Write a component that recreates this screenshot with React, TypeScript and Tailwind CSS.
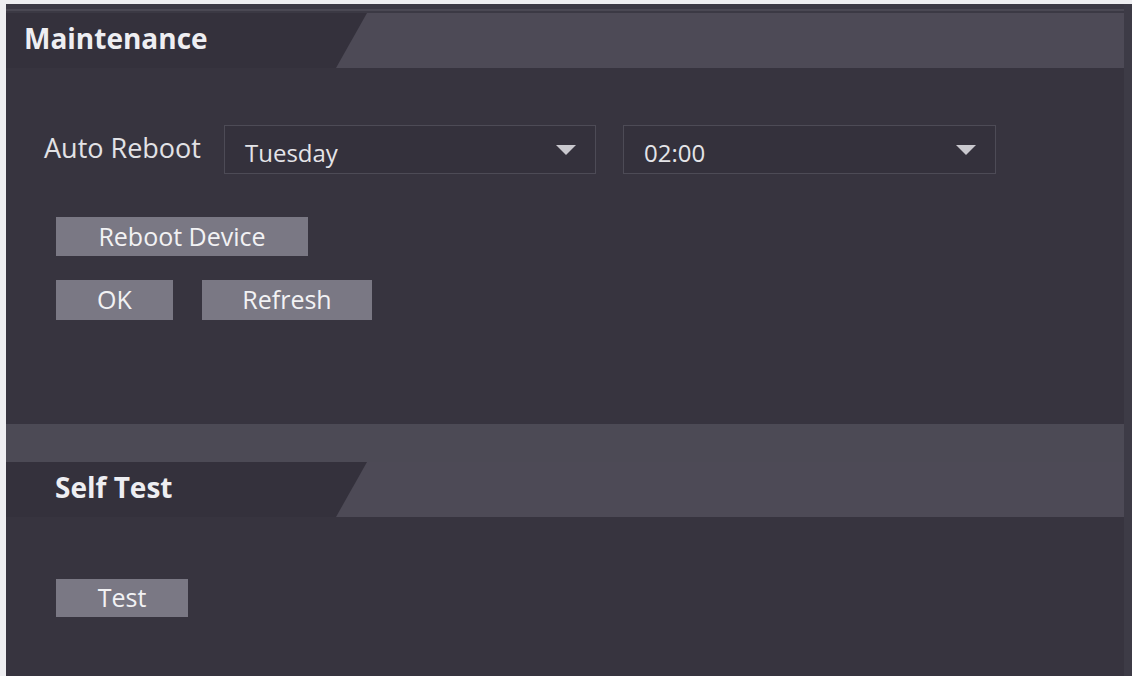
import React, { useState } from "react";

const days = ["Monday", "Tuesday", "Wednesday", "Thursday", "Friday", "Saturday", "Sunday"];

function Arrow() {
  return (
    <svg width="20" height="10" viewBox="0 0 20 10" className="shrink-0">
      <polygon points="0,0 20,0 10,10" fill="#c9c8ce" />
    </svg>
  );
}

function Dropdown({ value, width }: { value: string; width: string }) {
  return (
    <div
      className={`${width} h-[49px] flex items-center justify-between border border-[#4d4b56] bg-[#34313c] pl-[20px] pr-[19px]`}
    >
      <span className="text-[24px] text-[#e4e4e8] pt-[6px]">{value}</span>
      <Arrow />
    </div>
  );
}

function Button({ label, className }: { label: string; className: string }) {
  return (
    <button
      type="button"
      className={`${className} flex items-center justify-center bg-[#7a7884] text-[25px] text-[#f2f2f4]`}
    >
      {label}
    </button>
  );
}

function SectionHeader({ title, pl }: { title: string; pl: string }) {
  return (
    <div className="h-[55px] flex bg-[#4d4a56]">
      <div
        className={`w-[361px] h-full flex items-center ${pl} pb-[5px] bg-[#34313c] [clip-path:polygon(0_0,100%_0,calc(100%-31px)_100%,0_100%)]`}
      >
        <span className="text-[28px] font-bold text-[#eeeef2]">{title}</span>
      </div>
    </div>
  );
}

export default function App() {
  const [day] = useState(days[1]);
  const [time] = useState("02:00");

  return (
    <div
      className="w-[1132px] h-[676px] bg-[#eeeef1] pt-[4px] pl-[6px] overflow-hidden"
      style={{ fontFamily: '"Open Sans", "Liberation Sans", sans-serif' }}
    >
      <div className="h-[672px] flex flex-col bg-[#37343f] border-r-[8px] border-[#3d3b46]">
        {/* top strip above the first header */}
        <div className="h-[5px] bg-[#3b3944]" />
        <div className="h-[2px] bg-[#4a4853]" />
        <div className="h-[2px] bg-[#3b3944]" />

        <SectionHeader title="Maintenance" pl="pl-[18px]" />

        {/* maintenance body */}
        <div className="h-[356px] flex flex-col pt-[57px]">
          <div className="flex items-center pl-[38px]">
            <div className="w-[180px] text-[27px] text-[#e2e2e6] pb-[2px]">Auto Reboot</div>
            <Dropdown value={day} width="w-[372px]" />
            <div className="w-[27px]" />
            <Dropdown value={time} width="w-[373px]" />
          </div>

          <div className="pl-[50px] mt-[43px]">
            <Button label="Reboot Device" className="w-[252px] h-[39px]" />
          </div>
          <div className="pl-[50px] mt-[24px] flex gap-[29px]">
            <Button label="OK" className="w-[117px] h-[40px]" />
            <Button label="Refresh" className="w-[170px] h-[40px]" />
          </div>
        </div>

        <div className="h-[38px] bg-[#4c4a55]" />

        <SectionHeader title="Self Test" pl="pl-[49px]" />

        {/* self test body */}
        <div className="flex-1 pl-[50px] pt-[62px]">
          <Button label="Test" className="w-[132px] h-[38px]" />
        </div>
      </div>
    </div>
  );
}
